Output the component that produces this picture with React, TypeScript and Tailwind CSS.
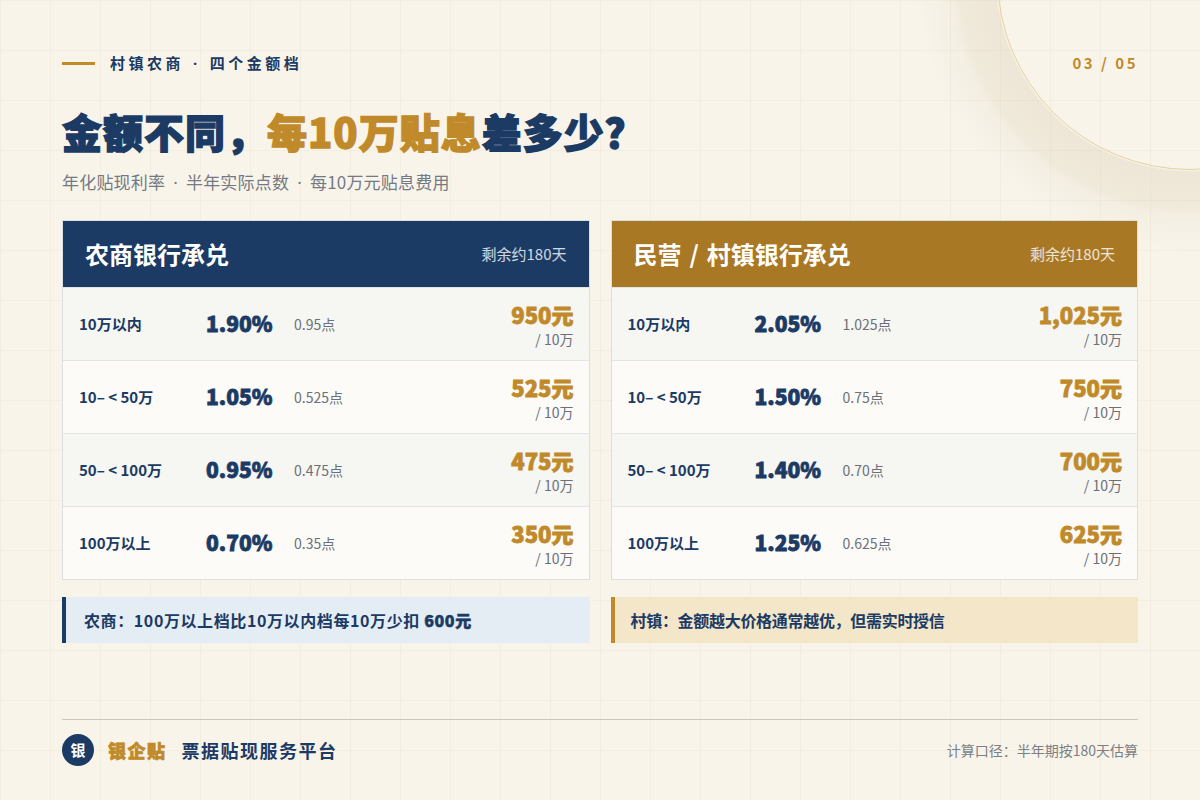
import React from "react"

type Tier = {
  label: React.ReactNode
  rate: string
  points: string
  price: string
}

// the CJK middle dot is full width; the reference uses the narrow latin one
const Dot = ({ gap }: { gap: string }) => <span className={`font-['Noto_Sans',sans-serif] ${gap}`}>·</span>

const ruralTiers: Tier[] = [
  { label: "10万以内", rate: "1.90%", points: "0.95点", price: "950元" },
  { label: "10– < 50万", rate: "1.05%", points: "0.525点", price: "525元" },
  { label: "50– < 100万", rate: "0.95%", points: "0.475点", price: "475元" },
  { label: "100万以上", rate: "0.70%", points: "0.35点", price: "350元" },
]

const villageTiers: Tier[] = [
  { label: "10万以内", rate: "2.05%", points: "1.025点", price: "1,025元" },
  { label: "10– < 50万", rate: "1.50%", points: "0.75点", price: "750元" },
  { label: "50– < 100万", rate: "1.40%", points: "0.70点", price: "700元" },
  { label: "100万以上", rate: "1.25%", points: "0.625点", price: "625元" },
]

function RateTable({ title, headerClass, tiers }: { title: React.ReactNode; headerClass: string; tiers: Tier[] }) {
  return (
    <div className="border border-[#dcdfe2] bg-[#fcfbf7]">
      <div className={`flex h-[66px] items-center justify-between pl-[22px] pr-[22px] ${headerClass}`}>
        <span className="text-[24px] font-bold leading-none text-white">{title}</span>
        <span className="text-[15px] text-white/80">剩余约180天</span>
      </div>
      {tiers.map((t, i) => (
        <div
          key={i}
          className={`flex h-[73px] items-center border-t border-[#e2e4e5] pl-[16px] pr-[15px] ${
            i % 2 === 0 ? "bg-[#f6f6f2]" : "bg-[#fcfbf7]"
          }`}
        >
          <div className="w-[127px] text-[15px] font-bold text-[#1b3a64]">{t.label}</div>
          <div className="w-[88px] text-[21px] font-black text-[#1b3a64] [-webkit-text-stroke:0.8px_#1b3a64]">{t.rate}</div>
          <div className="flex-1 text-[14px] text-[#6b7079]">{t.points}</div>
          <div className="flex flex-col items-end">
            <span className="text-[22px] font-black leading-[30px] text-[#c08a2a] [-webkit-text-stroke:0.8px_#c08a2a]">
              {t.price}
            </span>
            <span className="text-[14px] leading-[20px] text-[#6b7079]">/ 10万</span>
          </div>
        </div>
      ))}
    </div>
  )
}

export default function App() {
  return (
    <div className="relative h-[800px] w-[1200px] overflow-hidden bg-[#f8f4ea] bg-[linear-gradient(to_right,rgba(190,170,130,0.09)_1px,transparent_1px),linear-gradient(to_bottom,rgba(190,170,130,0.09)_1px,transparent_1px)] bg-[size:50px_50px] font-['Noto_Sans_CJK_SC','Noto_Sans',sans-serif]">
      {/* decorative rings, top right */}
      <div className="absolute left-[915px] top-[-298px] h-[550px] w-[550px] rounded-full bg-[radial-gradient(circle,transparent_193px,rgba(200,182,145,0.22)_195px,rgba(200,182,145,0.16)_232px,rgba(200,182,145,0.09)_238px,transparent_275px)]" />
      <div className="absolute left-[997px] top-[-216px] h-[386px] w-[386px] rounded-full border border-[#e5d2a2]" />

      <div className="relative flex flex-col px-[62px] pt-[53px]">
        <div className="flex h-[20px] items-center justify-between">
          <div className="flex items-center gap-[15px]">
            <div className="h-[3px] w-[33px] bg-[#c08a2a]" />
            <span className="text-[15px] font-bold tracking-[3.5px] text-[#1b3a64]">
              村镇农商<Dot gap="mx-[9px]" />四个金额档
            </span>
          </div>
          <span className="text-[15px] font-bold tracking-[2.5px] text-[#c08a2a]">03 / 05</span>
        </div>

        <h1 className="mt-[34px] text-[40px] font-black leading-[48px] tracking-[1px] text-[#1b3a64]">
          <span className="[-webkit-text-stroke:1.3px_#1b3a64]">金额不同，</span>
          <span className="text-[#c08a2a] [-webkit-text-stroke:1.3px_#c08a2a]">每10万贴息</span>
          <span className="[-webkit-text-stroke:1.3px_#1b3a64]">差多少？</span>
        </h1>

        <p className="mt-[15px] text-[17px] leading-[24px] tracking-[0.2px] text-[#747a84]">
          年化贴现利率<Dot gap="mx-[8px]" />半年实际点数<Dot gap="mx-[8px]" />每10万元贴息费用
        </p>

        <div className="mt-[25px] grid grid-cols-2 gap-[21px]">
          <RateTable title="农商银行承兑" headerClass="bg-[#1b3a64]" tiers={ruralTiers} />
          <RateTable
            title={
              <>
                民营<span className="mx-[8px]">/</span>村镇银行承兑
              </>
            }
            headerClass="bg-[#a97825]"
            tiers={villageTiers}
          />
        </div>

        <div className="mt-[17px] grid grid-cols-2 gap-[21px]">
          <div className="flex h-[46px] items-center border-l-4 border-[#1b3a64] bg-[#e5edf4] pl-[18px] text-[16px] font-bold tracking-[0.6px] text-[#1b3a64]">
            <span>
              农商：100万以上档比10万以内档每10万少扣{" "}
              <span className="font-black [-webkit-text-stroke:0.5px_#1b3a64]">600元</span>
            </span>
          </div>
          <div className="flex h-[46px] items-center border-l-4 border-[#c08a2a] bg-[#f3e6c9] pl-[16px] text-[16px] font-bold tracking-[-0.3px] text-[#1b3a64]">
            村镇：金额越大价格通常越优，但需实时授信
          </div>
        </div>

        <div className="mt-[76px] border-t border-[#c9c7c1]" />

        <div className="mt-[14px] flex h-[32px] items-center justify-between">
          <div className="flex items-center">
            <div className="flex h-[32px] w-[32px] items-center justify-center rounded-full bg-[#1b3a64] text-[15px] font-bold text-white">
              银
            </div>
            <span className="ml-[14px] text-[18px] font-black tracking-[1.5px] text-[#c08a2a] [-webkit-text-stroke:0.7px_#c08a2a]">
              银企贴
            </span>
            <span className="ml-[15px] text-[18px] font-bold tracking-[1.5px] text-[#1b3a64]">票据贴现服务平台</span>
          </div>
          <span className="text-[14px] text-[#7b7f86]">计算口径：半年期按180天估算</span>
        </div>
      </div>
    </div>
  )
}
